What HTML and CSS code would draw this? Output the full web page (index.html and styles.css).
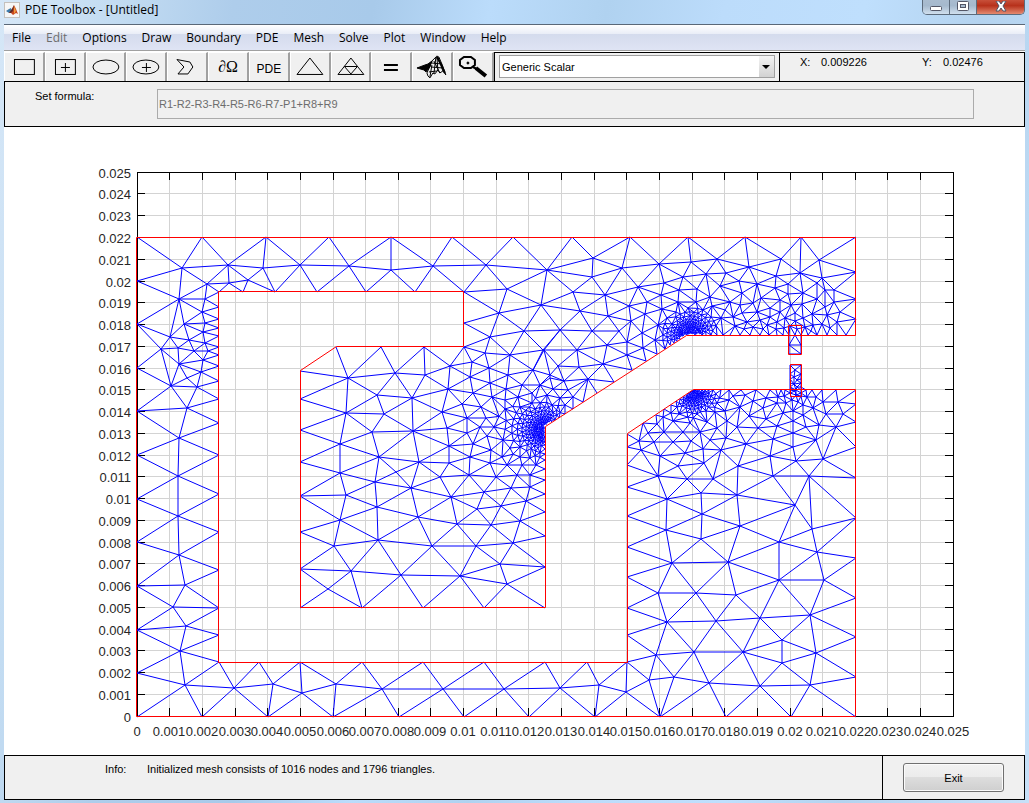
FILE: index.html
```html
<!DOCTYPE html>
<html lang="en">
<head>
<meta charset="utf-8">
<title>PDE Toolbox - [Untitled]</title>
<link rel="stylesheet" href="styles.css">
</head>
<body>
  <div class="window">
    <header class="titlebar">
      <svg class="app-icon" viewBox="0 0 16 16">
        <rect x="0.5" y="0.5" width="15" height="15" fill="#f6f6f6" stroke="#c4c0bc"/>
        <path d="M2 9 L5 7 L7 6 L8 9 L5 11 Z" fill="#3b78a8"/>
        <path d="M5 11 L8 7 L10 3 L12 7 L14 12 L12 11 L9 13 L7 11 Z" fill="#c8471c"/>
        <path d="M10 3 L9 9 L7 11 L5 11 L8 7 Z" fill="#5b2a26"/>
        <path d="M10 4 L12 9 L10 12 Z" fill="#f09a3c"/>
      </svg>
      <h1>PDE Toolbox - [Untitled]</h1>
      <div class="controls">
        <button class="ctl" aria-label="Minimize">
          <svg viewBox="0 0 12 12"><rect x="0.5" y="5.5" width="11" height="4" rx="1" fill="#fff" stroke="#535666"/></svg>
        </button>
        <button class="ctl" aria-label="Maximize">
          <svg viewBox="0 0 12 12"><rect x="0.5" y="0.5" width="11" height="9" rx="1" fill="#fff" stroke="#535666"/><rect x="3.5" y="3.5" width="5" height="3" fill="#a9bccf" stroke="#535666"/></svg>
        </button>
        <button class="ctl close" aria-label="Close">
          <svg viewBox="0 0 12 12"><path d="M1 0 H4 L6 3 L8 0 H11 L8 5 L11 10 H8 L6 7 L4 10 H1 L4 5 Z" fill="#fff" stroke="#535666"/></svg>
        </button>
      </div>
    </header>

    <main class="client">
      <nav class="menu">
        <a href="#">File</a>
        <a href="#" class="off">Edit</a>
        <a href="#">Options</a>
        <a href="#">Draw</a>
        <a href="#">Boundary</a>
        <a href="#">PDE</a>
        <a href="#">Mesh</a>
        <a href="#">Solve</a>
        <a href="#">Plot</a>
        <a href="#">Window</a>
        <a href="#">Help</a>
      </nav>

      <div class="bar">
        <div class="tools">
          <button aria-label="Rectangle"><svg viewBox="1 0 38 28"><rect x="10.5" y="6.5" width="20" height="15"/></svg></button>
          <button aria-label="Centered rectangle"><svg viewBox="1 0 38 28"><rect x="10.5" y="6.5" width="20" height="15"/><path d="M16 14.5 H25 M20.5 10 V19"/></svg></button>
          <button aria-label="Ellipse"><svg viewBox="1 0 38 28"><ellipse cx="20" cy="14" rx="13" ry="7"/></svg></button>
          <button aria-label="Centered ellipse"><svg viewBox="1 0 38 28"><ellipse cx="20" cy="14" rx="13" ry="7"/><path d="M16 14.5 H25 M20.5 10 V19"/></svg></button>
          <button aria-label="Polygon"><svg viewBox="1 0 38 28"><path d="M10 6.5 L23 9 L26 14 L21 21 L11 21 L17 14 Z"/></svg></button>
          <button class="omega">∂Ω</button>
          <button class="pde">PDE</button>
          <button aria-label="Initialize mesh"><svg viewBox="1 0 38 28"><path d="M7 21.5 L20 5 L33 21.5 Z"/></svg></button>
          <button aria-label="Refine mesh"><svg viewBox="1 0 38 28"><path d="M7 21.5 L20 5 L33 21.5 Z M13.5 13.5 H26.5 L20 21 Z"/></svg></button>
          <button aria-label="Solve"><svg viewBox="1 0 38 28"><path class="thick" d="M13 12 H27 M13 17 H27"/></svg></button>
          <button aria-label="Plot solution">
            <svg viewBox="1 0 38 28">
              <path class="solid" d="M5 15 L13 12 L16 11 L20 8 L18 14 L14 19 L12 17 Z"/>
              <path d="M20 8 L25 3 L27 4 L30 11 L34 22 L31 18 L28 20 L26 17 L23 21 L21 20 L18 25 L16 23 L15 20 L18 13 Z"/>
              <path d="M24 4 L22 21 M25 4 L26 17 M26 4 L31 18 M20 10 L30 11 M19 14 L31 15 M17 19 L25 18 M22 8 L28 20 M20 12 L18 24"/>
              <path class="thick" d="M25 4 L30 13 L33 20"/>
            </svg>
          </button>
          <button aria-label="Zoom">
            <svg viewBox="1 0 38 28">
              <path class="thick" d="M11 4 H18 L22 7 V12 L18 15 H11 L7 12 V7 Z"/>
              <circle class="solid" cx="15" cy="10" r="1"/>
              <path class="thick" d="M20 14 L24 16"/>
              <path class="handle" d="M23 15 L33 23"/>
            </svg>
          </button>
        </div>
        <div class="popup">
          <div class="select">
            <select aria-label="Application">
              <option>Generic Scalar</option>
              <option>Generic System</option>
            </select>
          </div>
        </div>
        <div class="coords">
          <span>X:</span><output>0.009226</output>
          <span>Y:</span><output>0.02476</output>
        </div>
      </div>

      <div class="formula">
        <label for="formula">Set formula:</label>
        <input type="text" id="formula" value="R1-R2-R3-R4-R5-R6-R7-P1+R8+R9">
      </div>

      <svg class="plot" id="plot" viewBox="4 127 1021 628"></svg>

      <footer class="status">
        <div class="info"><span>Info:</span><span>Initialized mesh consists of 1016 nodes and 1796 triangles.</span></div>
        <div class="exit"><button>Exit</button></div>
      </footer>
    </main>
  </div>
  <script src="mesh.js"></script>
</body>
</html>
```
FILE: styles.css
```css
*{
  box-sizing: border-box;
}

body{
  margin: 0;
  font-family: "Liberation Sans", Arial, sans-serif;
  font-size: 11px;
  color: #000;
}

button, input, select{
  font: inherit;
  color: inherit;
}

.window{
  min-height: 100vh;
  padding: 0 4px 2px;
  background: linear-gradient(100deg, #d6e7f7 0%, #c3dcf2 10%, #aecdeb 20%, #a8caea 32%, #bbdcfb 42%, #b0d2f0 52%, #bcdcfb 62%, #bfdffd 74%, #b4d3ef 84%, #c6e0f8 100%);
}

.titlebar{
  display: flex;
  height: 24px;
}

.titlebar h1{
  flex: 1;
  margin: 0;
  font-family: "Open Sans", sans-serif;
  font-size: 12px;
  font-weight: normal;
  line-height: 20px;
}

.app-icon{
  width: 16px;
  height: 16px;
  margin: 2px 5px 0 0;
}

.controls{
  display: flex;
  height: 15px;
  border: 1px solid #5c6b7c;
  border-top: 0;
  border-radius: 0 0 5px 5px;
  overflow: hidden;
}

.ctl{
  width: 27px;
  padding: 0;
  border: 0;
  border-right: 1px solid #5c6b7c;
  background: linear-gradient(#a9bccf 0, #a5b9cd 40%, #d0dfee 100%);
}

.ctl svg{
  display: block;
  width: 12px;
  height: 12px;
  margin: 0 auto;
}

.close{
  width: 47px;
  border-right: 0;
  background: linear-gradient(#c8503a 0, #b7311b 40%, #e48a70 100%);
}

.client{
  display: flex;
  flex-direction: column;
  border-top: 1px solid #5a6878;
  background: #fff;
}

.menu{
  display: flex;
  height: 26px;
  padding-left: 8px;
  gap: 15px;
  border-bottom: 1px solid #a0a0a0;
  background: linear-gradient(#fff 0, #e9edf7 36%, #d4dbed 37%, #dfe4f4 100%);
  font-family: "Open Sans", sans-serif;
  font-size: 12px;
  line-height: 26px;
}

.menu a{
  color: #000;
  text-decoration: none;
}

.menu .off{
  color: #6d6d6d;
}

.bar{
  display: flex;
  height: 30px;
  margin-top: 1px;
  border-bottom: 1px solid #000;
}

.tools{
  display: flex;
  width: 490px;
}

.tools button{
  flex: 1 1 0;
  min-width: 0;
  padding: 0;
  border: 0;
  border-left: 1px solid #fff;
  border-top: 1px solid #fff;
  border-right: 2px solid #a0a0a0;
  background: #f0f0f0;
}

.tools svg{
  display: block;
  width: 100%;
  height: 28px;
  fill: none;
  stroke: #000;
  stroke-width: 1;
}

.tools .thick{
  stroke-width: 2;
}

.tools .handle{
  stroke-width: 4;
}

.tools .solid{
  fill: #000;
}

.tools .omega{
  font-family: "Liberation Serif", serif;
  font-size: 16px;
}

.tools .pde{
  padding-top: 4px;
  font-size: 12px;
}

.popup{
  flex: 1;
  padding: 2px 4px;
  border-top: 1px solid #000;
  border-left: 1px solid #000;
  background: #f0f0f0;
}

.select{
  position: relative;
}

.select select{
  appearance: none;
  width: 100%;
  height: 23px;
  padding: 0 2px;
  border: 1px solid #a0a0a0;
  border-radius: 0;
  background: #fff;
}

.select::after{
  content: "";
  position: absolute;
  top: 1px;
  right: 1px;
  width: 15px;
  height: 21px;
  background: linear-gradient(#f4f4f4, #d2d2d2);
  pointer-events: none;
}

.select::before{
  content: "";
  position: absolute;
  z-index: 1;
  top: 10px;
  right: 5px;
  border: 4px solid transparent;
  border-top-color: #000;
  border-bottom: 0;
  pointer-events: none;
}

.coords{
  display: flex;
  width: 246px;
  padding: 3px 0 0 20px;
  border: 1px solid #000;
  border-bottom: 0;
  background: #f0f0f0;
}

.coords span{
  width: 21px;
}

.coords output{
  width: 101px;
}

.coords output:last-child{
  width: auto;
}

.formula{
  display: flex;
  height: 45px;
  padding: 7px 50px 7px 30px;
  border: 1px solid #000;
  border-top: 0;
  background: #f0f0f0;
}

.formula label{
  width: 122px;
  padding-top: 1px;
}

.formula input{
  flex: 1;
  padding: 0 1px;
  border: 1px solid #ababab;
  background: #f0f0f0;
  color: #6d6d6d;
}

.plot{
  display: block;
  width: 100%;
  font-size: 13px;
}

.plot path{
  fill: none;
  stroke-width: 1;
}

.plot .grid{
  stroke: #d3d3d3;
  shape-rendering: crispEdges;
}

.plot .axes{
  stroke: #000;
  shape-rendering: crispEdges;
}

.plot .mesh{
  stroke: #00f;
}

.plot .edge{
  stroke: #f00;
}

.plot text{
  fill: #262626;
}

.plot .xtick{
  text-anchor: middle;
}

.plot .ytick{
  text-anchor: end;
}

.status{
  display: flex;
  height: 45px;
  border: 1px solid #000;
  background: #f0f0f0;
}

.info{
  display: flex;
  flex: 1;
  padding: 7px 0 0 100px;
}

.info span:first-child{
  width: 42px;
}

.exit{
  width: 142px;
  padding: 7px 20px;
  border-left: 1px solid #000;
}

.exit button{
  width: 101px;
  height: 29px;
  border: 1px solid #707070;
  border-radius: 3px;
  background: linear-gradient(#f2f2f2 0, #ebebeb 49%, #dddddd 50%, #cfcfcf 100%);
  box-shadow: inset 0 0 0 1px #fbfbfb;
}
```
FILE: mesh.js
```js
// axes box in drawing units
const X0 = 137, X1 = 953, Y0 = 716, Y1 = 172;

const core = [[136,237],[855,237],[855,335],[686,335],[545,426],[545,607],[300,607],[300,370],[336,346],[463,346],
  [463,291],[218,291],[218,662],[627,662],[627,433],[693,389],[855,389],[855,716],[136,716]];
const upperPin = [[788,325],[801,325],[801,354],[788,354]];
const lowerPin = [[790,364],[801,364],[801,396],[790,396]];

// nodes on the boundary
const rim = `
137,237 202,237 266,237 329,237 391,237 452,237 513,237 572,237 630,237 688,237 745,237 801,237 856,237
137,281 137,324 137,368 137,411 137,455 137,499 137,542 137,586 137,630 137,673 137,717
219,292 219,307 219,319 219,328 219,336 219,347 219,355 219,366 219,381 219,399 219,423 219,455 219,494 219,532 219,570 219,608 219,635 219,662
243,292 275,292 317,292 366,292 415,292 464,292 464,323 464,347
202,717 268,717 333,717 399,717 464,717 529,717 595,717 660,717 726,717 791,717 856,717
259,662 300,662 362,662 423,662 484,662 545,662 587,662 627,662
627,434 627,447 627,465 627,487 627,516 627,547 627,577 627,608 627,635
856,390 856,404 856,422 856,447 856,478 856,518 856,558 856,598 856,637 856,677
643,423 656,415 664,409 671,405 676,401 680,399 683,397 686,395 688,393 690,392 691,391 693,390
695,390 697,390 699,390 702,390 705,390 709,390 713,390 721,390 729,390 741,390 756,390 770,390 776,390 781,390 785,390 790,390 796,390 801,390 806,390 812,390 822,390 836,390
336,347 381,347 424,347 300,371 300,399 300,430 300,462 300,496 300,532 300,569 300,608 362,608 423,608 484,608 545,608
545,567 545,536 545,512 545,494 545,480 545,469 545,460 545,454 545,449 545,445 545,442 545,439 545,437 545,435 545,433 545,431 545,429 545,427
547,426 549,424 552,422 555,420 559,418 565,414 573,409 583,402 597,393 614,382 632,370 646,361 657,354 665,349 670,345 674,343 677,341 680,339 682,338 684,336 686,335
688,335 690,335 692,335 695,335 698,335 702,335 706,335 711,335 717,335 723,335 730,335 740,335 750,335 760,335 769,335 777,335 783,335 789,335 795,335 801,335 808,335 817,335 827,335 837,335 846,335 856,335
856,272 856,299 856,319
789,345 801,345 789,354 801,354 790,365 801,365 790,374 801,374 790,379 801,379 790,383 801,383 790,387 801,387 790,393 801,393`;

// nodes inside the domain
const inner = `
182,268 179,299 228,265 263,268 300,265 207,284 229,283 248,280 205,299 202,312 184,324 205,323 203,332 170,337 189,340 205,343
178,348 161,349 194,351 208,351 179,364 203,360 201,372 187,378 171,386 197,387 187,408 179,438 178,476 178,516 179,555
185,585 173,607 186,626 180,651 185,685 234,688 273,684 302,693 336,684 382,689 443,689 504,689 560,688 599,685 626,692
649,680 674,677 656,655 667,622 658,593 672,563 728,562 696,593 736,595 779,580 824,580 817,552 716,621 760,618 810,615
782,640 782,663 816,653 743,652 694,652 709,683 760,686 810,685
701,539 666,530 740,526 779,542 812,529 795,505 702,514 667,499 701,493 737,495 773,476 809,476 687,479 713,479 658,476
738,466 678,466 704,463 660,456 770,456 796,461 823,459 641,450 685,453 703,449 721,450 639,441 654,442 673,442 691,441
710,440 726,438 746,444 773,439 793,447 816,440 793,433 648,433 664,432 683,432 700,432 717,428 737,427 758,428 777,426
793,421 806,427 819,425 836,427 657,424 673,421 690,423 707,422 727,421 749,416 766,419 783,413 803,415 826,414 843,414
838,402 823,402 813,408 740,407 725,411 753,401 763,408 717,403 729,400 777,403 803,405 793,411 733,396 745,395
663,417 671,413 679,414 687,412 697,414 706,411 715,412 677,407 766,398 786,403 792,400 798,402 784,396 807,397 816,397 778,397 796,395 801,396
349,266 391,270 433,266 486,265 348,378 395,373 425,375 450,366 472,362 485,353 490,337 499,313 507,289 547,270 541,305
524,331 510,355 489,368 470,377 448,389 412,398 377,395 346,413 384,414 442,412 462,404 473,393 490,383 508,375 533,370
544,350 492,397 481,407 506,389 522,385 467,418 486,418 518,397 505,400 532,393 540,385 550,375 505,409 520,407 532,403
372,432 413,431 340,444 379,457 419,462 449,446 447,428 467,433 449,463 340,473 375,482 396,472 411,488 440,477 469,475
470,457 473,444 491,450 490,463 496,477 346,495 377,507 418,517 451,497 484,492 511,488 530,487 477,509 501,506 526,501
340,520 457,524 491,525 520,521 334,546 378,540 432,546 476,546 513,543 351,571 401,575 460,576 500,564 507,584 328,589
480,427 494,427 487,436 503,440 502,457 507,465 520,447 530,475 517,475 522,465 520,457 510,448 536,465 530,458
593,258 592,277 622,268 659,264 691,262 717,259 749,267 781,259 819,260 800,273 776,276 822,278 834,290 834,302 706,274
726,273 739,281 757,284 683,277 664,283 638,287 605,295 573,292 580,311 608,316 629,306 647,302 661,295 679,290 697,289
720,286 710,297 696,302 678,302 662,309 645,314 631,321 619,331 592,331 560,330 543,350 577,350 607,345 627,342 642,333
658,325 627,355 603,364 643,348 655,340 663,335 579,367 558,366 550,378 564,381 588,379 553,389 568,390 547,395 560,398
573,397 552,405 565,405 742,293 761,298 775,288 788,284 803,293 817,283 825,290 817,299 788,294 780,300 791,305 802,304
812,314 825,307 840,312 827,315 822,324 837,322 730,302 725,310 740,305 753,303 742,313 757,312 770,308 747,322 733,317
760,320 770,317 780,312 712,306 721,318 703,310 735,326 753,327 767,325 777,322 785,318 795,313 803,318 795,321 813,325
830,328 805,327 797,329 790,326 784,328 776,329 811,331 744,329 763,329 688,308 676,312 667,318 684,317 672,324
795,370 794,377 797,380 794,384 797,387 795,391`;

// sides that are kept whatever the Delaunay test says
const fixed = `
182,268-228,265 486,265-547,270 182,268-179,299 179,299-205,299 173,607-219,608 137,586-185,585
234,688-273,684 336,684-382,689 382,689-443,689 443,689-504,689 504,689-560,688
300,569-351,571 351,571-401,575 401,575-460,576 378,540-432,546 432,546-476,546 300,496-346,495 372,432-413,431 457,524-491,525
658,593-696,593 696,593-736,595 672,563-728,562 779,580-824,580 667,622-716,621 716,621-760,618 760,618-810,615
656,655-694,652 694,652-743,652 709,683-760,686 760,686-810,685 782,640-782,663
773,476-809,476 809,476-856,478 687,479-713,479 543,350-577,350 593,258-592,277 591,331-619,331`;

const nodes = [...new Set((rim + inner).trim().split(/\s+/))].map(s => s.split(",").map(Number));

function inside(x, y, poly) {
  let hit = false;
  for (let i = 0, j = poly.length - 1; i < poly.length; j = i++) {
    const [ax, ay] = poly[i], [bx, by] = poly[j];
    if ((ay > y) !== (by > y) && x < (bx - ax) * (y - ay) / (by - ay) + ax) hit = !hit;
  }
  return hit;
}

// grade the mesh towards a re-entrant corner
function refine(cx, cy, rmax) {
  let odd = 0;
  for (let r = 1.5; r < rmax; r *= 1.2) {
    odd = 1 - odd;
    const h = Math.max(1.8, r * 0.2);
    const n = Math.round(2 * Math.PI * r / h);
    for (let k = 0; k < n; k++) {
      const a = 2 * Math.PI * (k + odd / 2 + 0.2 * Math.sin(k * 7 + r)) / n;
      const x = cx + r * Math.cos(a), y = cy + r * Math.sin(a);
      if (!inside(x, y, core)) continue;
      if (nodes.every(p => Math.hypot(p[0] - x, p[1] - y) > h * 0.8)) nodes.push([x, y]);
    }
  }
}

// Bowyer-Watson
function circle(a, b, c) {
  const [ax, ay] = nodes[a];
  const bx = nodes[b][0] - ax, by = nodes[b][1] - ay;
  const cx = nodes[c][0] - ax, cy = nodes[c][1] - ay;
  const d = 2 * (bx * cy - by * cx);
  const B = bx * bx + by * by, C = cx * cx + cy * cy;
  const x = (cy * B - by * C) / d;
  const y = (bx * C - cx * B) / d;
  return { v: [a, b, c], x: ax + x, y: ay + y, r: x * x + y * y };
}

function triangulate() {
  // a tiny shake keeps nodes in a row from being exactly collinear
  nodes.forEach((p, i) => {
    p[0] += 0.02 * Math.sin(i * 12.9);
    p[1] += 0.02 * Math.sin(i * 78.2);
  });
  const n = nodes.length;
  nodes.push([-90000, -80000], [95000, -81000], [300, 120000]);
  let tris = [circle(n, n + 1, n + 2)];
  for (let i = 0; i < n; i++) {
    const [x, y] = nodes[i];
    const open = new Map();
    tris = tris.filter(t => {
      if ((t.x - x) ** 2 + (t.y - y) ** 2 >= t.r) return true;
      for (let k = 0; k < 3; k++) {
        const a = t.v[k], b = t.v[(k + 1) % 3];
        const key = Math.min(a, b) + "_" + Math.max(a, b);
        open.has(key) ? open.delete(key) : open.set(key, [a, b]);
      }
      return false;
    });
    open.forEach(([a, b]) => tris.push(circle(a, b, i)));
  }
  return tris.filter(t => t.v.every(k => k < n));
}

function crosses([a, b], [c, d]) {
  const side = (p, q, r) => (q[0] - p[0]) * (r[1] - p[1]) - (q[1] - p[1]) * (r[0] - p[0]);
  const far = (p, q) => Math.hypot(p[0] - q[0], p[1] - q[1]) > 2;
  return far(a, c) && far(a, d) && far(b, c) && far(b, d) &&
    side(a, b, c) * side(a, b, d) < 0 && side(c, d, a) * side(c, d, b) < 0;
}

function onEdge(a, b) {
  const near = ([x, y], [ax, ay], [bx, by]) => {
    const l = Math.hypot(bx - ax, by - ay);
    const t = ((x - ax) * (bx - ax) + (y - ay) * (by - ay)) / l;
    return Math.abs((x - ax) * (by - ay) - (y - ay) * (bx - ax)) / l < 1.5 && t > -2 && t < l + 2;
  };
  return core.some((p, i) => {
    const q = core[(i + 1) % core.length];
    return near(a, p, q) && near(b, p, q);
  });
}

function meshPath() {
  const seen = new Set();
  let sides = [];
  triangulate().forEach(({ v }) => {
    const x = (nodes[v[0]][0] + nodes[v[1]][0] + nodes[v[2]][0]) / 3;
    const y = (nodes[v[0]][1] + nodes[v[1]][1] + nodes[v[2]][1]) / 3;
    if (![core, upperPin, lowerPin].some(p => inside(x, y, p))) return;
    for (let k = 0; k < 3; k++) {
      const a = v[k], b = v[(k + 1) % 3];
      const key = Math.min(a, b) + "_" + Math.max(a, b);
      if (seen.has(key)) continue;
      seen.add(key);
      // sides that lie on the boundary are left to the red outline
      if (!onEdge(nodes[a], nodes[b])) sides.push([nodes[a], nodes[b]]);
    }
  });
  fixed.trim().split(/\s+/).forEach(s => {
    const side = s.split("-").map(p => p.split(",").map(Number));
    const hits = sides.filter(o => crosses(side, o));
    if (hits.length !== 1) return;
    sides = sides.filter(o => o !== hits[0]);
    sides.push(side);
  });
  return sides.map(s => "M" + s.map(p => p[0].toFixed(1) + " " + p[1].toFixed(1)).join("L")).join("");
}

const outline = poly => "M" + poly.map(([x, y]) => (x + 0.5) + " " + (y + 0.5)).join("L") + "Z";

function draw() {
  let grid = "", axes = "", labels = "";
  for (let i = 0; i <= 25; i++) {
    const x = Math.floor(X0 + i * (X1 - X0) / 25 + 0.2) + 0.5;
    const y = Math.floor(Y0 - i * (Y0 - Y1) / 25 + 0.2) + 0.5;
    const text = String(i / 1000);
    grid += `M${x} ${Y0}V${Y1}M${X0} ${y}H${X1}`;
    axes += `M${x} ${Y0}v-8M${x} ${Y1}v8M${X0} ${y}h8M${X1} ${y}h-8`;
    labels += `<text class="xtick" x="${x - 0.5}" y="736">${text}</text>`;
    labels += `<text class="ytick" x="131" y="${y + 5.5}">${text}</text>`;
  }
  axes += outline([[X0, Y0], [X1, Y0], [X1, Y1], [X0, Y1]]);

  refine(545, 430, 48);
  refine(690, 335, 30);
  refine(693, 390, 28);

  document.getElementById("plot").innerHTML =
    `<path class="grid" d="${grid}"/><path class="axes" d="${axes}"/>` +
    `<path class="mesh" d="${meshPath()}"/>` +
    `<path class="edge" d="${outline(core)}${outline(upperPin)}${outline(lowerPin)}"/>` + labels;
}

draw();
```
